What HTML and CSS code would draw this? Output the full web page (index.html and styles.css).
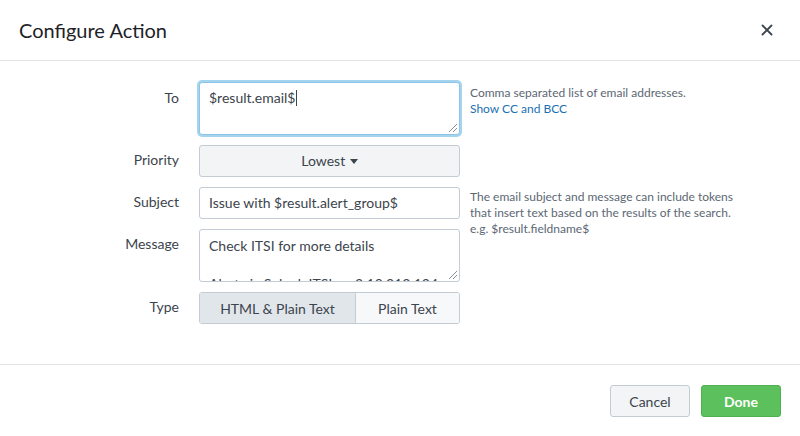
FILE: index.html
```html
<!DOCTYPE html>
<html>
<head>
<meta charset="utf-8">
<link rel="stylesheet" href="styles.css">
</head>
<body>
<div class="modal">
  <div class="header">
    <h1 class="title">Configure Action</h1>
    <span class="close"><svg width="12" height="12" viewBox="0 0 12 12"><path d="M1.5 1.5 L10.5 10.5 M10.5 1.5 L1.5 10.5" stroke="#3c444d" stroke-width="1.8" stroke-linecap="round"/></svg></span>
  </div>
  <div class="body">
    <div class="form">
      <div class="label l-to">To</div>
      <div class="control"><div class="textarea focus"><span>$result.email$<span class="caret"></span></span><span class="grip"></span></div></div>
      <div class="help"><div>Comma separated list of email addresses.</div><a class="link">Show CC and BCC</a></div>

      <div class="label">Priority</div>
      <div class="control"><div class="select">Lowest <span class="tri"></span></div></div>
      <div class="help"></div>

      <div class="label">Subject</div>
      <div class="control"><div class="input">Issue with $result.alert_group$</div></div>
      <div class="help help-span"><div>The email subject and message can include tokens that insert text based on the results of the search.</div><div>e.g. $result.fieldname$</div></div>

      <div class="label">Message</div>
      <div class="control"><div class="textarea msg"><div class="msgtext">Check ITSI for more details<br><br>Alert via Splunk ITSI on 2.10.212.124</div><span class="grip"></span></div></div>

      <div class="label l-type">Type</div>
      <div class="control"><div class="toggle"><span class="opt active">HTML &amp; Plain Text</span><span class="opt">Plain Text</span></div></div>
      <div class="help"></div>
    </div>
  </div>
  <div class="footer">
    <button class="btn cancel">Cancel</button>
    <button class="btn done">Done</button>
  </div>
</div>
</body>
</html>
```
FILE: styles.css
```css
html, body { margin: 0; padding: 0; background: #fff; }
body { font-family: "Lato", "Open Sans", sans-serif; color: #3c444d; width: 800px; height: 436px; overflow: hidden; }
.modal { width: 800px; height: 436px; display: flex; flex-direction: column; }
.header { height: 61px; box-sizing: border-box; border-bottom: 1px solid #e1e3e5; display: flex; align-items: center; justify-content: space-between; padding: 0 27px 0 19px; }
.title { margin: 0; font-size: 20px; font-weight: 400; color: #1e2228; letter-spacing: 0; }
.close { display: flex; width: 12px; height: 12px; }
.body { flex: 1; padding-top: 21px; box-sizing: border-box; border-bottom: 1px solid #e1e3e5; }
.form { display: grid; grid-template-columns: 179px 261px 280px; column-gap: 20px; row-gap: 10px; align-items: start; }
.form .help { margin-left: -10px; }
.label { text-align: right; font-size: 14px; line-height: 20px; padding-top: 5px; color: #3c444d; }
.l-to { padding-top: 6px; }
.l-type { padding-top: 5px; }
.control { position: relative; }
.textarea, .input, .select { box-sizing: border-box; border: 1px solid #c3cbd4; border-radius: 3px; font-size: 14px; color: #3c444d; }
.textarea { height: 53px; padding: 6px 9px; position: relative; overflow: hidden; background: #fff; }
.textarea.focus { border-color: #8bc4e6; box-shadow: 0 0 0 2px #a6d4ef; background: #fff; }
.caret { display: inline-block; width: 1px; height: 16px; background: #3c444d; vertical-align: -3px; margin-left: 1px; }
.msgtext { line-height: 19px; }
.grip { position: absolute; right: 2px; bottom: 2px; width: 8px; height: 8px; background: linear-gradient(135deg, transparent 45%, #8a8f95 45%, #8a8f95 53%, transparent 53%, transparent 72%, #8a8f95 72%, #8a8f95 80%, transparent 80%); }
.input { height: 32px; padding: 0 9px; line-height: 30px; background: #fff; }
.select { height: 32px; line-height: 30px; text-align: center; background: #f2f4f5; border-color: #c3cbd4; }
.tri { display: inline-block; width: 0; height: 0; border-left: 4px solid transparent; border-right: 4px solid transparent; border-top: 5px solid #3c444d; vertical-align: 2px; margin-left: 1px; }
.help { font-size: 12px; line-height: 16px; color: #5c6773; padding-top: 3px; }
.help-span { grid-row: span 2; padding-top: 2px; width: 266px; }
.link { color: #1a6fb1; display: block; }
.toggle { display: flex; height: 32px; box-sizing: border-box; border: 1px solid #c3cbd4; border-radius: 3px; overflow: hidden; font-size: 14px; }
.opt { display: flex; align-items: center; justify-content: center; background: #f7f8fa; color: #3c444d; }
.opt.active { background: #e1e6eb; width: 155px; border-right: 1px solid #c3cbd4; }
.opt:last-child { flex: 1; }
.footer { height: 71px; display: flex; justify-content: flex-end; align-items: flex-start; padding: 20px 19px 0 0; box-sizing: border-box; gap: 11px; }
.btn { width: 80px; height: 32px; border-radius: 3px; font-family: inherit; font-size: 14px; cursor: pointer; }
.cancel { background: #f2f4f5; border: 1px solid #c3cbd4; color: #3c444d; }
.done { background: #5cc05c; border: 1px solid #4fb04f; color: #fff; font-weight: 700; }
```
